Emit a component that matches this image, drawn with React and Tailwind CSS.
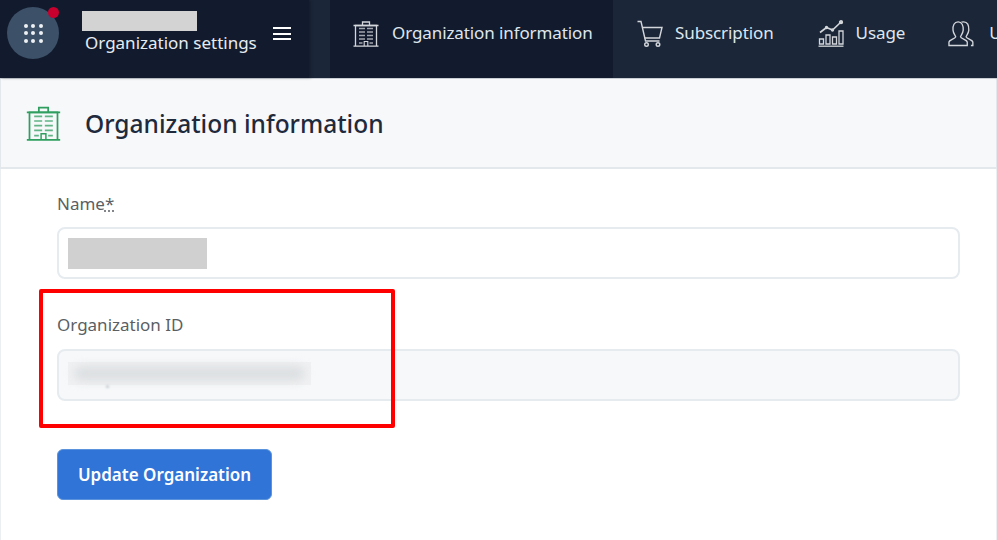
const FONT = "font-['Noto_Sans','Open_Sans',sans-serif]";

function BuildingIcon({ className }) {
  return (
    <svg viewBox="0 0 26 27" fill="none" stroke="currentColor" className={className}>
      <path d="M2.500 26V5.500h21V26" strokeWidth="1.300" />
      <path d="M0.500 26.200h25M0.500 5.500h25M9.500 5V2h7v3" strokeWidth="1.300" />
      <path
        d="M6 8.500h6M14 8.500h6M6 12h6M14 12h6M6 15.500h6M14 15.500h6M6 19h6M14 19h6M6 23h3.500M16.500 23H20"
        strokeWidth="1.300"
        opacity="0.75"
      />
      <path d="M11.200 26v-4.500h3.600V26" strokeWidth="1.100" />
    </svg>
  );
}

function CartIcon({ className }) {
  return (
    <svg viewBox="0 0 26 27" fill="none" stroke="currentColor" strokeWidth="1.400" className={className}>
      <path d="M0.500 1.500h3.500l4.500 19.500h14" />
      <path d="M5 7.500h20l-2.500 10.500H7.500" />
      <circle cx="9.500" cy="24.500" r="1.800" />
      <circle cx="21" cy="24.500" r="1.800" />
    </svg>
  );
}

function UsageIcon({ className }) {
  return (
    <svg viewBox="0 0 26 27" fill="none" stroke="currentColor" strokeWidth="1.300" className={className}>
      <path d="M0.500 26.200h25" />
      <path d="M1.500 24v-5h4v5zM8 24v-9h4v9zM14.500 24v-7h4v7zM21 24V11h4v13z" />
      <path d="M2 12.500l6.500-5 6 2.500 8-7.500" strokeWidth="1.600" />
      <circle cx="23" cy="2.200" r="1.500" fill="currentColor" />
      <circle cx="8.500" cy="7.500" r="1" fill="currentColor" />
      <circle cx="14.500" cy="10" r="1" fill="currentColor" />
    </svg>
  );
}

function UsersIcon({ className }) {
  return (
    <svg viewBox="0 0 27 27" fill="none" stroke="currentColor" strokeWidth="1.400" className={className}>
      <path d="M1 26v-3.500c0-2.500 6.500-3.500 7-5.500.2-1-2.500-3-2.800-7C4.800 5 6.500 1.500 10.500 1.500S16 5 15.800 10c-.3 4-3 6-2.800 7 .5 2 7 3 7 5.500V26z" />
      <path d="M14 1.800c.8-.3 1.500-.4 2.300-.4 4 0 5.500 3.500 5.300 8.600-.3 4-3 6-2.800 7 .5 2 7 3 7 5.500V26h-2" />
    </svg>
  );
}

function NavTab({ icon: Icon, label, active, textClass, gapClass = "ml-3" }) {
  return (
    <div className={`flex h-full shrink-0 items-center pb-[11px] ${active ? "bg-[#121b2d]" : ""} ${textClass}`}>
      <Icon className="h-[27px] w-[26px] shrink-0 text-[#d3d6da]" />
      <span className={`${gapClass} mb-[2px] whitespace-nowrap text-[17px] leading-none tracking-[-0.1px] text-[#dfe6ee]`}>
        {label}
      </span>
    </div>
  );
}

function Field({ label, required, disabled, inputGap = "mt-3", children }) {
  return (
    <div>
      <label className="block text-[17px] leading-6 text-[#5a5f64]">
        {label}
        {required ? <span className="underline decoration-dotted">*</span> : null}
      </label>
      <div
        className={`${inputGap} flex h-[52px] items-center rounded-lg border-2 border-[#e6ebef] pl-[9px] ${disabled ? "bg-[#f6f8fa]" : "bg-white"}`}
      >
        {children}
      </div>
    </div>
  );
}

export default function App() {
  return (
    <div className={`relative h-[540px] w-[997px] overflow-hidden bg-white ${FONT}`}>
      {/* Top bar */}
      <header className="flex h-[79px] border-b border-[#c8ced4] bg-[#1b2739]">
        <div className="flex w-[309px] shrink-0 items-start bg-[#121b2d] pl-[7px] shadow-[2px_0_3px_rgba(0,0,0,0.25)]">
          <div className="relative mt-[7px] flex size-[52px] shrink-0 items-center justify-center rounded-full bg-[#3c5068]">
            <div className="grid grid-cols-3 gap-[3.500px]">
              {Array.from({ length: 9 }).map((_, i) => (
                <span key={i} className="size-[4px] rounded-full bg-[#eef1f4]" />
              ))}
            </div>
            <span className="absolute right-0 top-0 size-[11px] rounded-full bg-[#c8002d]" />
          </div>
          <div className="ml-[26px] mt-[11px] flex flex-col">
            <div className="ml-[-3px] h-5 w-[115px] bg-[#d3d3d3]" />
            <span className="mt-px whitespace-nowrap text-[17px] leading-[22px] text-[#e6ecf2]">
              Organization settings
            </span>
          </div>
          <div className="ml-[16px] mt-[27px] flex w-[18px] shrink-0 flex-col gap-[3.500px]">
            <span className="h-[2px] bg-white" />
            <span className="h-[2px] bg-white" />
            <span className="h-[2px] bg-white" />
          </div>
        </div>
        <nav className="ml-[21px] flex min-w-0 flex-1 overflow-hidden">
          <NavTab icon={BuildingIcon} label="Organization information" active textClass="w-[283px] pl-[23px]" gapClass="ml-[13px]" />
          <NavTab icon={CartIcon} label="Subscription" textClass="ml-[24px]" />
          <NavTab icon={UsageIcon} label="Usage" textClass="ml-[44px]" />
          <NavTab icon={UsersIcon} label="Users" textClass="ml-[43px]" gapClass="ml-[15px]" />
        </nav>
      </header>

      {/* Page heading */}
      <div className="flex h-[90px] items-center border-x border-b-2 border-[#e2e8ec] bg-[#f6f8fa] pl-[25px]">
        <BuildingIcon className="h-[36px] w-[35px] text-[#2f9e5f]" />
        <h1 className="ml-[24px] mt-[2px] text-[24.500px] font-medium leading-none text-[#1f2a3c]">Organization information</h1>
      </div>

      {/* Form */}
      <div className="flex h-[371px] flex-col border-x border-[#eceff2] pl-[56px] pr-[36px] pt-[23px]">
        <Field label="Name" required inputGap="mt-[11px]">
          <div className="mt-px h-[31px] w-[139px] bg-[#d0d0d0]" />
        </Field>
        <div className="mt-[34px]">
          <Field label="Organization ID" disabled>
            <div className="relative mb-[4px] h-[23px] w-[243px] bg-[#f0f1f3]">
              <div className="absolute inset-x-[6px] inset-y-[4px] rounded-full bg-[#dcdfe1] blur-[5px]" />
              <div className="absolute left-[38px] top-[23px] h-[3px] w-[3px] rounded-full bg-[#c4c8cc] blur-[1px]" />
            </div>
          </Field>
        </div>
        <button
          type="button"
          className="mt-[48px] h-[51px] w-[215px] rounded-md border border-[#5b93dd] bg-[#2f74d6] text-[17px] font-semibold text-white"
        >
          Update Organization
        </button>
      </div>

      {/* Red highlight annotation */}
      <div className="pointer-events-none absolute left-[39px] top-[289px] h-[139px] w-[356px] rounded-[2px] border-[4px] border-[#fe0000]" />
    </div>
  );
}
